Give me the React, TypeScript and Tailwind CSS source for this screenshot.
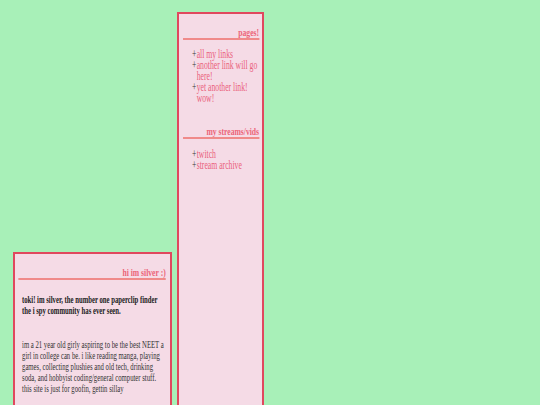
import React from "react";

const serif = { fontFamily: '"Liberation Serif", "Times New Roman", serif' };

function Heading({ children }: { children: React.ReactNode }) {
  return (
    <div className="text-right text-[11.4px] font-bold leading-[12px] text-[#ec6478] border-b-2 border-[#f08a8a]">
      {children}
    </div>
  );
}

function Link({ children }: { children: React.ReactNode }) {
  return (
    <li className="flex">
      <span className="w-[7px] shrink-0 text-[#333]">+</span>
      <span className="text-[#ea5f7c]">{children}</span>
    </li>
  );
}

export default function App() {
  return (
    <div
      className="h-[405px] w-[540px] overflow-hidden bg-[#a8f0b8] flex items-start gap-[5px] pl-[13px]"
      style={serif}
    >
      <div className="mt-[252px] w-[159px] h-[200px] shrink-0 border-2 border-[#e0485e] bg-[#f5dbe6] overflow-hidden">
        <div className="w-[231px] origin-left scale-x-[0.67] pt-[12px] pl-[4.5px] pr-[6px] text-[10px] leading-[11px]">
          <Heading>hi im silver :)</Heading>
          <div className="pl-[6px] w-[221px]">
            <p className="mt-[14px] font-bold text-[#222]">
              toki! im silver, the number one paperclip finder the i spy community has ever seen.
            </p>
            <p className="mt-[23px] text-[#333]">
              im a 21 year old girly aspiring to be the best NEET a girl in college can be. i like reading manga, playing games, collecting plushies and old tech, drinking soda, and hobbyist coding/general computer stuff. this site is just for goofin, gettin sillay
            </p>
          </div>
        </div>
      </div>
      <div className="mt-[12px] w-[87px] h-[440px] shrink-0 border-2 border-[#e0485e] bg-[#f5dbe6] overflow-hidden">
        <div className="w-[124px] origin-left scale-x-[0.67] pt-[12px] pl-[6px] pr-[4.5px] text-[11.5px] leading-[11px]">
          <Heading>pages!</Heading>
          <ul className="mt-[9px] pl-[13.4px]">
            <Link>all my links</Link>
            <Link>another link will go here!</Link>
            <Link>yet another link! wow!</Link>
          </ul>
          <div className="mt-[21px]">
            <Heading>my streams/vids</Heading>
          </div>
          <ul className="mt-[10px] pl-[13.4px]">
            <Link>twitch</Link>
            <Link>stream archive</Link>
          </ul>
        </div>
      </div>
    </div>
  );
}
